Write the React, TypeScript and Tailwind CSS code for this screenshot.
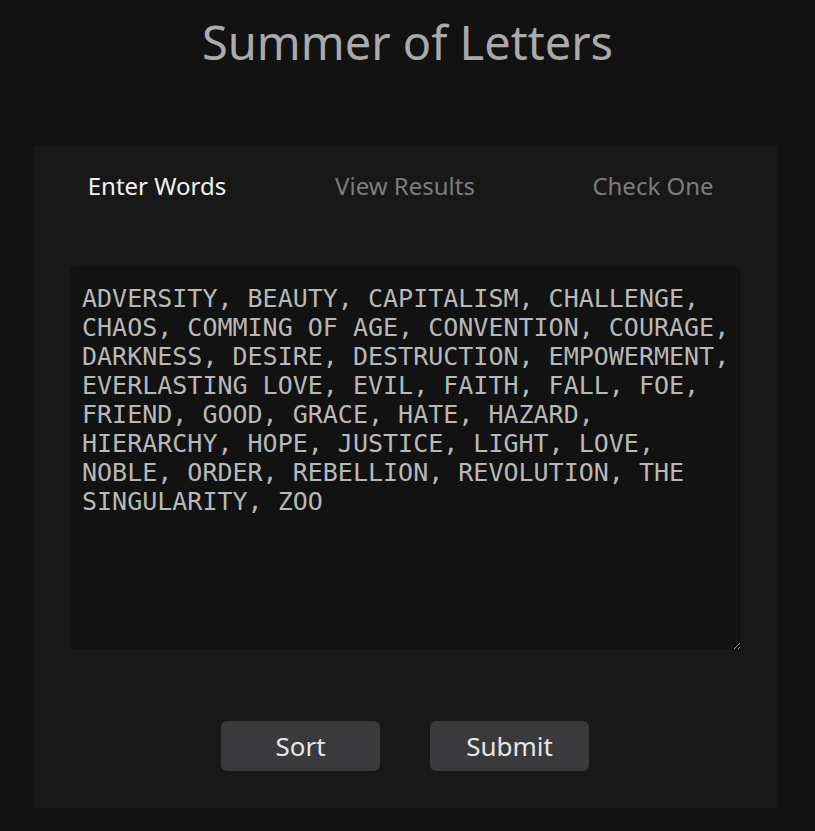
import { useState } from "react";

const words =
  "ADVERSITY, BEAUTY, CAPITALISM, CHALLENGE, CHAOS, COMMING OF AGE, CONVENTION, COURAGE, DARKNESS, DESIRE, DESTRUCTION, EMPOWERMENT, EVERLASTING LOVE, EVIL, FAITH, FALL, FOE, FRIEND, GOOD, GRACE, HATE, HAZARD, HIERARCHY, HOPE, JUSTICE, LIGHT, LOVE, NOBLE, ORDER, REBELLION, REVOLUTION, THE SINGULARITY, ZOO";

const tabs = ["Enter Words", "View Results", "Check One"];

export default function App() {
  const [tab, setTab] = useState(0);
  const [text, setText] = useState(words);

  return (
    <div className="min-h-screen bg-[#121212] font-['Noto_Sans',sans-serif]">
      <h1 className="pt-[10px] text-center text-[47px] leading-[64px] text-[#aaaaaa]">
        Summer of Letters
      </h1>
      <div className="mt-[72px] ml-[33px] w-[744px] bg-[#181818] pb-[37px]">
        <div className="grid grid-cols-3 pt-[24px]">
          {tabs.map((t, i) => (
            <button
              key={t}
              onClick={() => setTab(i)}
              className={
                i === tab
                  ? "text-center text-[24px] leading-[32px] text-[#f2f2f2]"
                  : "text-center text-[24px] leading-[32px] text-[#7c7c7c]"
              }
            >
              {t}
            </button>
          ))}
        </div>
        <div className="px-[35px] pt-[63px]">
          <textarea
            value={text}
            onChange={(e) => setText(e.target.value)}
            spellCheck={false}
            className="block h-[386px] w-full resize-y rounded-lg border border-[#1d1d1d] bg-[#121212] pt-[18px] pb-[13px] pl-[13px] pr-[6px] font-['DejaVu_Sans_Mono',monospace] text-[25px] leading-[29px] text-[#b8b8b8] outline-none"
          />
        </div>
        <div className="mt-[70px] flex justify-center gap-[50px]">
          <button className="h-[50px] w-[159px] rounded-md bg-[#3a3a3c] text-[26px] text-[#e6e6e6]">
            Sort
          </button>
          <button className="h-[50px] w-[159px] rounded-md bg-[#3a3a3c] text-[26px] text-[#e6e6e6]">
            Submit
          </button>
        </div>
      </div>
    </div>
  );
}
